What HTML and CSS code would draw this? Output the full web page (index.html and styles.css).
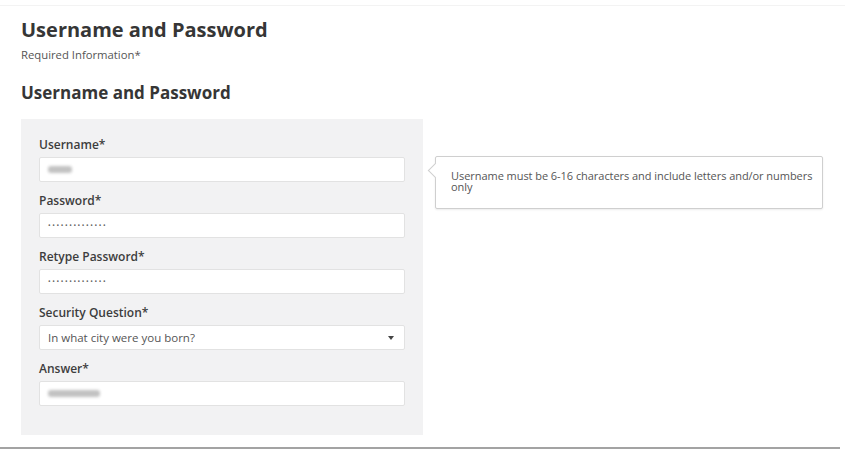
FILE: index.html
```html
<!DOCTYPE html>
<html lang="en">
<head>
  <meta charset="UTF-8">
  <title>Username and Password</title>
  <link rel="stylesheet" href="styles.css">
</head>
<body>
  <div class="page">
    <h1 class="title">Username and Password</h1>
    <p class="required">Required Information*</p>
    <h2 class="subtitle">Username and Password</h2>

    <div class="row">
      <div class="panel">
        <div class="field">
          <label>Username*</label>
          <div class="input"><span class="blur short"></span></div>
        </div>
        <div class="field">
          <label>Password*</label>
          <div class="input"><span class="dots">••••••••••••••</span></div>
        </div>
        <div class="field">
          <label>Retype Password*</label>
          <div class="input"><span class="dots">••••••••••••••</span></div>
        </div>
        <div class="field">
          <label>Security Question*</label>
          <div class="input select">
            <span>In what city were you born?</span>
            <span class="caret"></span>
          </div>
        </div>
        <div class="field">
          <label>Answer*</label>
          <div class="input"><span class="blur long"></span></div>
        </div>
      </div>

      <div class="tooltip">
        Username must be 6-16 characters and include letters and/or numbers only
      </div>
    </div>
  </div>
  <div class="bottom-line"></div>
</body>
</html>
```

FILE: styles.css
```css
body {
  margin: 0;
  font-family: "Open Sans", sans-serif;
  color: #3a3a3a;
  background: #fff;
}

.page {
  border-top: 1px solid #f3f3f3;
  margin-top: 5px;
  padding: 12px 0 0 21px;
  height: 430px;
  box-sizing: border-box;
}

.title {
  font-size: 20px;
  font-weight: 700;
  line-height: 24px;
  margin: 0;
  color: #363636;
}

.required {
  font-size: 11.3px;
  line-height: 14px;
  margin: 6px 0 0;
  color: #555;
}

.subtitle {
  font-size: 17px;
  font-weight: 700;
  line-height: 22px;
  margin: 20px 0 0;
  color: #363636;
}

.row {
  display: flex;
  align-items: flex-start;
  margin-top: 15px;
}

.panel {
  width: 402px;
  box-sizing: border-box;
  background: #f2f2f3;
  padding: 18px 18px 18px 17px;
}

.field {
  margin-bottom: 11px;
}

.field label {
  display: block;
  font-size: 12px;
  font-weight: 600;
  line-height: 16px;
  margin: 0 0 4px 1px;
  color: #3d3d3d;
}

.input {
  height: 25px;
  box-sizing: border-box;
  margin-left: 1px;
  background: #fff;
  border: 1px solid #e2e2e2;
  border-radius: 2px;
  display: flex;
  align-items: center;
  padding: 0 8px;
  font-size: 11.5px;
  color: #555;
}

.dots {
  font-size: 7px;
  letter-spacing: 1.6px;
  color: #666;
}

.blur {
  display: inline-block;
  height: 7px;
  background: #c2c2c2;
  border-radius: 3px;
  filter: blur(1.5px);
}

.blur.short {
  width: 24px;
}

.blur.long {
  width: 52px;
}

.select {
  justify-content: space-between;
}

.caret {
  width: 0;
  height: 0;
  border-left: 3px solid transparent;
  border-right: 3px solid transparent;
  border-top: 4px solid #444;
  margin-right: 2px;
}

.tooltip {
  position: relative;
  margin: 37px 0 0 12px;
  width: 388px;
  height: 53px;
  box-sizing: border-box;
  border: 1px solid #cfcfcf;
  border-radius: 2px;
  box-shadow: 0 1px 2px rgba(0, 0, 0, 0.08);
  padding: 13px 0 0 15px;
  font-size: 11px;
  letter-spacing: -0.05px;
  line-height: 11px;
  color: #555;
  background: #fff;
}

.tooltip::before {
  content: "";
  position: absolute;
  left: -6px;
  top: 8px;
  width: 10px;
  height: 10px;
  background: #fff;
  border-left: 1px solid #cfcfcf;
  border-bottom: 1px solid #cfcfcf;
  transform: rotate(45deg);
}

.bottom-line {
  width: 840px;
  height: 2px;
  background: #a3a3a3;
  margin-top: 12px;
}
```
